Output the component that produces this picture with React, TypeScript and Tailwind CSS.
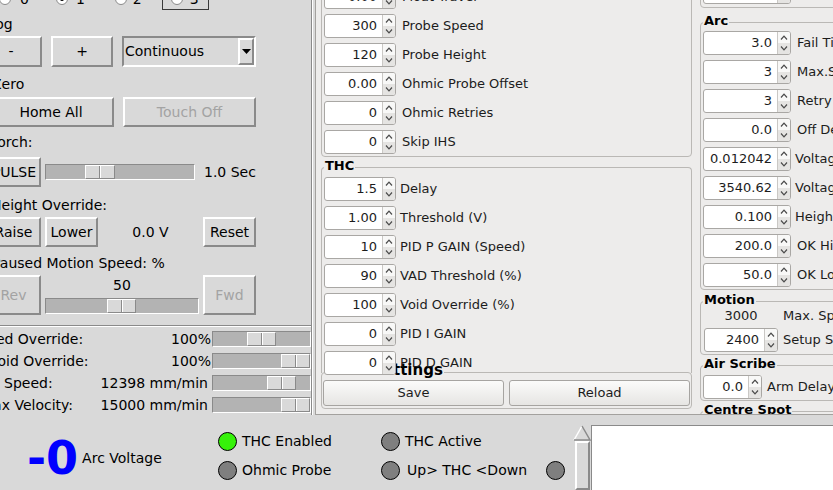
import React from "react";

type SpinRow = { value: string; label: string };

const TK_RAISED =
  "border-2 border-t-white border-l-white border-r-[#8a8a8a] border-b-[#8a8a8a] bg-[#d9d9d9]";

function TkButton({
  children,
  className = "",
  disabled,
}: {
  children: React.ReactNode;
  className?: string;
  disabled?: boolean;
}) {
  return (
    <div
      className={`flex shrink-0 items-center justify-center whitespace-nowrap ${TK_RAISED} ${
        disabled ? "text-[#a3a3a3]" : "text-black"
      } ${className}`}
    >
      {children}
    </div>
  );
}

function TkSlider({ className, handleLeft, handleWidth = 29 }: { className: string; handleLeft: number; handleWidth?: number }) {
  return (
    <div
      className={`flex h-[16px] shrink-0 border border-t-[#8a8a8a] border-l-[#8a8a8a] border-r-white border-b-white bg-[#b3b3b3] ${className}`}
    >
      <div
        className="flex h-full border border-t-white border-l-white border-r-[#8a8a8a] border-b-[#8a8a8a] bg-[#d9d9d9]"
        style={{ marginLeft: handleLeft, width: handleWidth }}
      >
        <div className="flex-1 border-r border-[#8a8a8a]" />
        <div className="flex-1 border-l border-white" />
      </div>
    </div>
  );
}

function Radio({ checked, className = "" }: { checked?: boolean; className?: string }) {
  return (
    <div
      className={`flex h-[12px] w-[12px] shrink-0 items-center justify-center rounded-full border border-[#8a8a8a] bg-white ${className}`}
    >
      {checked && <div className="h-[4px] w-[4px] rounded-full bg-black" />}
    </div>
  );
}

function Led({ on, className = "" }: { on?: boolean; className?: string }) {
  return (
    <div
      className={`h-[19px] w-[19px] shrink-0 rounded-full border-[1.5px] border-black ${
        on ? "bg-[#36f20a]" : "bg-[#7f7f7f]"
      } ${className}`}
    />
  );
}

function Chevron({ up }: { up?: boolean }) {
  return (
    <svg width="8" height="5" viewBox="0 0 8 5">
      <polyline
        points={up ? "1,4.5 4,1.2 7,4.5" : "1,0.5 4,3.8 7,0.5"}
        fill="none"
        stroke="#4a4a4a"
        strokeWidth="1.2"
      />
    </svg>
  );
}

function SpinBox({ value, className }: { value: string; className: string }) {
  return (
    <div
      className={`flex h-[24px] shrink-0 overflow-hidden rounded-[3px] border border-[#a9a7a4] bg-white ${className}`}
    >
      <div className="flex flex-1 items-center justify-end pr-[5px] text-[13px] text-[#1c1c1c]">
        {value}
      </div>
      <div className="flex w-[13px] flex-col border-l border-[#cac8c5]">
        <div className="flex flex-1 items-center justify-center bg-[#f8f8f7]">
          <Chevron up />
        </div>
        <div className="flex flex-1 items-center justify-center bg-[#e5e4e2]">
          <Chevron />
        </div>
      </div>
    </div>
  );
}

function GroupBox({
  title,
  titleClass = "left-[2px] top-[-10px] text-[13px]",
  className = "",
  children,
}: {
  title?: string;
  titleClass?: string;
  className?: string;
  children?: React.ReactNode;
}) {
  return (
    <div className={`relative shrink-0 rounded-[4px] border border-[#bab8b5] ${className}`}>
      {title && (
        <span
          className={`absolute whitespace-nowrap bg-[#edeceb] px-[1px] font-bold leading-[16px] text-black ${titleClass}`}
        >
          {title}
        </span>
      )}
      {children}
    </div>
  );
}

const probeRows: SpinRow[] = [
  { value: "0.00", label: "Float Travel" },
  { value: "300", label: "Probe Speed" },
  { value: "120", label: "Probe Height" },
  { value: "0.00", label: "Ohmic Probe Offset" },
  { value: "0", label: "Ohmic Retries" },
  { value: "0", label: "Skip IHS" },
];

const thcRows: SpinRow[] = [
  { value: "1.5", label: "Delay" },
  { value: "1.00", label: "Threshold (V)" },
  { value: "10", label: "PID P GAIN (Speed)" },
  { value: "90", label: "VAD Threshold (%)" },
  { value: "100", label: "Void Override (%)" },
  { value: "0", label: "PID I GAIN" },
  { value: "0", label: "PID D GAIN" },
];

const arcRows: SpinRow[] = [
  { value: "3.0", label: "Fail Timeout" },
  { value: "3", label: "Max.Starts" },
  { value: "3", label: "Retry Delay" },
  { value: "0.0", label: "Off Delay" },
  { value: "0.012042", label: "Voltage Scale" },
  { value: "3540.62", label: "Voltage Offset" },
  { value: "0.100", label: "Height Per Volt" },
  { value: "200.0", label: "OK High Volts" },
  { value: "50.0", label: "OK Low Volts" },
];

const overrides = [
  { label: "Feed Override:", shift: -20, value: "100%", pad: "pr-[1px]", handle: 34 },
  { label: "Void Override:", shift: -11, value: "100%", pad: "pr-[1px]", handle: 68 },
  { label: "Jog Speed:", shift: -22, value: "12398 mm/min", pad: "pr-[4px]", handle: 54 },
  { label: "Max Velocity:", shift: -19, value: "15000 mm/min", pad: "pr-[4px]", handle: 68 },
];

export default function App() {
  return (
    <div className="h-[490px] w-[833px] overflow-hidden bg-[#d9d9d9] font-['DejaVu_Sans',sans-serif]">
      <div className="flex h-[415px]">
        {/* tk control column */}
        <div className="flex h-[415px] w-[312px] shrink-0 flex-col overflow-hidden border-r border-[#8a8a8a] text-[14px] leading-[17px] text-black">
          <div className="mt-[-12px] flex h-[22px] shrink-0 items-center">
            <Radio className="ml-[-1px]" />
            <span className="ml-[9px]">0</span>
            <Radio checked className="ml-[27px]" />
            <span className="ml-[8px]">1</span>
            <Radio className="ml-[30px]" />
            <span className="ml-[6px]">2</span>
            <div className="ml-[20px] flex h-full items-center border border-[#3a3a3a] pl-[8px] pr-[9px]">
              <Radio />
              <span className="ml-[7px]">3</span>
            </div>
          </div>

          <div className="ml-[-9px] mt-[6px] h-[17px] shrink-0">Jog</div>
          <div className="mt-[3px] flex h-[31px] shrink-0">
            <TkButton className="ml-[-20px] w-[62px]">-</TkButton>
            <TkButton className="ml-[9px] w-[62px]">+</TkButton>
            <div className="ml-[9px] flex w-[134px] shrink-0 items-center border-2 border-t-[#8a8a8a] border-l-[#8a8a8a] border-r-white border-b-white">
              <span className="ml-[1px] flex-1">Continuous</span>
              <div className={`flex h-full w-[16px] items-center justify-center ${TK_RAISED}`}>
                <svg width="9" height="5" viewBox="0 0 9 5">
                  <polygon points="0,0 9,0 4.5,5" fill="#000" />
                </svg>
              </div>
            </div>
          </div>

          <div className="ml-[-8px] mt-[9px] h-[17px] shrink-0">Zero</div>
          <div className="mt-[4px] flex h-[30px] shrink-0">
            <TkButton className="ml-[-12px] w-[126px]">Home All</TkButton>
            <TkButton disabled className="ml-[9px] w-[133px]">
              Touch Off
            </TkButton>
          </div>

          <div className="ml-[-9px] mt-[7px] h-[17px] shrink-0">Torch:</div>
          <div className="mt-[6px] flex h-[30px] shrink-0 items-center">
            <TkButton className="ml-[-13px] h-full w-[54px]">PULSE</TkButton>
            <TkSlider className="ml-[4px] w-[150px]" handleLeft={39} handleWidth={30} />
            <span className="ml-[9px]">1.0 Sec</span>
          </div>

          <div className="ml-[-9px] mt-[10px] h-[17px] shrink-0">Height Override:</div>
          <div className="mt-[3px] flex h-[30px] shrink-0">
            <TkButton className="ml-[-14px] w-[55px]">Raise</TkButton>
            <TkButton className="ml-[4px] w-[53px]">Lower</TkButton>
            <div className="flex w-[105px] items-center justify-center">0.0 V</div>
            <TkButton className="w-[53px]">Reset</TkButton>
          </div>

          <div className="ml-[-8px] mt-[8px] h-[17px] shrink-0 whitespace-nowrap">Paused Motion Speed: %</div>
          <div className="mt-[3px] flex h-[40px] shrink-0">
            <TkButton disabled className="ml-[-14px] w-[55px]">
              Rev
            </TkButton>
            <div className="ml-[4px] flex w-[154px] flex-col pb-[1px]">
              <div className="mt-[2px] text-center">50</div>
              <TkSlider className="mt-auto w-[154px]" handleLeft={61} />
            </div>
            <TkButton disabled className="ml-[4px] w-[53px]">
              Fwd
            </TkButton>
          </div>

          <div className="mt-[10px] h-[2px] shrink-0 border-t border-b border-t-[#8a8a8a] border-b-white" />

          <div className="mt-[1px] flex flex-col">
            {overrides.map((row) => (
              <div key={row.label} className="flex h-[22px] items-center">
                <div className="flex w-[212px] shrink-0 items-center overflow-hidden whitespace-nowrap">
                  <span className="shrink-0" style={{ marginLeft: row.shift }}>
                    {row.label}
                  </span>
                  <span className={`ml-auto ${row.pad}`}>{row.value}</span>
                </div>
                <TkSlider className="w-[99px]" handleLeft={row.handle} />
              </div>
            ))}
          </div>
        </div>

        <div className="w-[3px] shrink-0 border-l border-white" />

        {/* qt parameter panel */}
        <div className="flex h-[415px] w-[518px] shrink-0 gap-[8px] overflow-hidden border-l border-b border-[#a3a19e] bg-[#edeceb] pl-[5px] text-[13px] leading-[16px] text-[#1c1c1c]">
          <div className="flex w-[371px] shrink-0 flex-col">
            <GroupBox title="Probing" className="mt-[-26px] flex flex-col gap-[5px] pb-[2px] pl-[2px] pt-[10px]">
              {probeRows.map((row) => (
                <div key={row.label} className="flex items-center">
                  <SpinBox value={row.value} className="w-[72px]" />
                  <span className="ml-[6px] whitespace-nowrap">{row.label}</span>
                </div>
              ))}
            </GroupBox>

            <GroupBox
              title="THC"
              className="z-10 mt-[10px] flex h-[206px] flex-col gap-[5px] rounded-b-none border-b-0 pl-[2px] pt-[9px]"
            >
              {thcRows.map((row) => (
                <div key={row.label} className="flex items-center">
                  <SpinBox value={row.value} className="w-[72px]" />
                  <span className="ml-[4px] whitespace-nowrap">{row.label}</span>
                </div>
              ))}
            </GroupBox>

            <GroupBox
              title="Settings"
              titleClass="left-[49px] top-[-11px] text-[15px]"
              className="mt-[-1px] flex gap-[5px] px-[1px] pb-[2px] pt-[7px]"
            >
              <div className="flex h-[26px] flex-1 items-center justify-center rounded-[3px] border border-[#a6a4a1] bg-gradient-to-b from-[#fbfbfa] to-[#e6e5e3]">
                Save
              </div>
              <div className="flex h-[26px] flex-1 items-center justify-center rounded-[3px] border border-[#a6a4a1] bg-gradient-to-b from-[#fbfbfa] to-[#e6e5e3]">
                Reload
              </div>
            </GroupBox>
          </div>

          <div className="flex w-[200px] shrink-0 flex-col">
            <GroupBox title="Safe" className="mt-[-30px] flex flex-col pb-[3px] pl-[2px] pt-[9px]">
              <div className="flex items-center">
                <SpinBox value="20" className="w-[88px]" />
                <span className="ml-[6px] whitespace-nowrap">Safe Height</span>
              </div>
            </GroupBox>

            <GroupBox title="Arc" className="mt-[14px] flex flex-col gap-[5px] pb-[2px] pl-[2px] pt-[8px]">
              {arcRows.map((row, i) => (
                <div key={row.label} className="flex items-center">
                  <SpinBox value={row.value} className="w-[88px]" />
                  <span className={`${i >= 4 && i <= 6 ? "ml-[4px]" : "ml-[6px]"} whitespace-nowrap`}>
                    {row.label}
                  </span>
                </div>
              ))}
            </GroupBox>

            <GroupBox title="Motion" className="mt-[11px] flex flex-col pb-[2px] pl-[3px] pt-[5px]">
              <div className="flex h-[18px] items-center">
                <span className="w-[74px] text-center">3000</span>
                <span className="ml-[5px] whitespace-nowrap">Max. Speed</span>
              </div>
              <div className="mt-[3px] flex items-center">
                <SpinBox value="2400" className="w-[74px]" />
                <span className="ml-[5px] whitespace-nowrap">Setup Speed</span>
              </div>
            </GroupBox>

            <GroupBox title="Air Scribe" className="mt-[10px] flex flex-col pb-[1px] pl-[2px] pt-[9px]">
              <div className="flex items-center">
                <SpinBox value="0.0" className="w-[59px]" />
                <span className="ml-[5px] whitespace-nowrap">Arm Delay</span>
              </div>
            </GroupBox>

            <GroupBox title="Centre Spot" className="mt-[10px] h-[30px]" />
          </div>
        </div>
      </div>

      {/* status strip */}
      <div className="flex h-[75px] text-[14px] leading-[17px] text-black">
        <div className="w-[218px] shrink-0 pl-[27px]">
          <div className="mt-[20px] flex h-[46px] items-center">
            <span className="text-[46px] font-bold leading-[46px] text-[#0000ff]">-0</span>
            <span className="ml-[4px]">Arc Voltage</span>
          </div>
        </div>

        <div className="flex w-[163px] shrink-0 flex-col pt-[12px]">
          <div className="flex h-[29px] items-center">
            <Led on />
            <span className="ml-[5px]">THC Enabled</span>
          </div>
          <div className="flex h-[29px] items-center">
            <Led />
            <span className="ml-[5px]">Ohmic Probe</span>
          </div>
        </div>

        <div className="flex w-[192px] shrink-0 flex-col pt-[12px]">
          <div className="flex h-[29px] items-center">
            <Led />
            <span className="ml-[5px]">THC Active</span>
          </div>
          <div className="flex h-[29px] items-center">
            <Led />
            <span className="ml-[7px] whitespace-nowrap">{"Up> THC <Down"}</span>
            <Led className="ml-[19px]" />
          </div>
        </div>

        <div className="mt-[10px] flex w-[18px] shrink-0 flex-col items-center">
          <svg width="18" height="16" viewBox="0 0 18 16">
            <polygon points="9,1 1,15 17,15" fill="#d9d9d9" />
            <polyline points="1,15 9,1" fill="none" stroke="#ffffff" strokeWidth="1.5" />
            <polyline points="9,1 17,15 1,15" fill="none" stroke="#8a8a8a" strokeWidth="1.5" />
          </svg>
          <div className={`ml-[1px] w-[15px] flex-1 ${TK_RAISED}`} />
        </div>

        <div className="mt-[10px] flex-1 border-l border-t border-[#8a8a8a] bg-white" />
      </div>
    </div>
  );
}
